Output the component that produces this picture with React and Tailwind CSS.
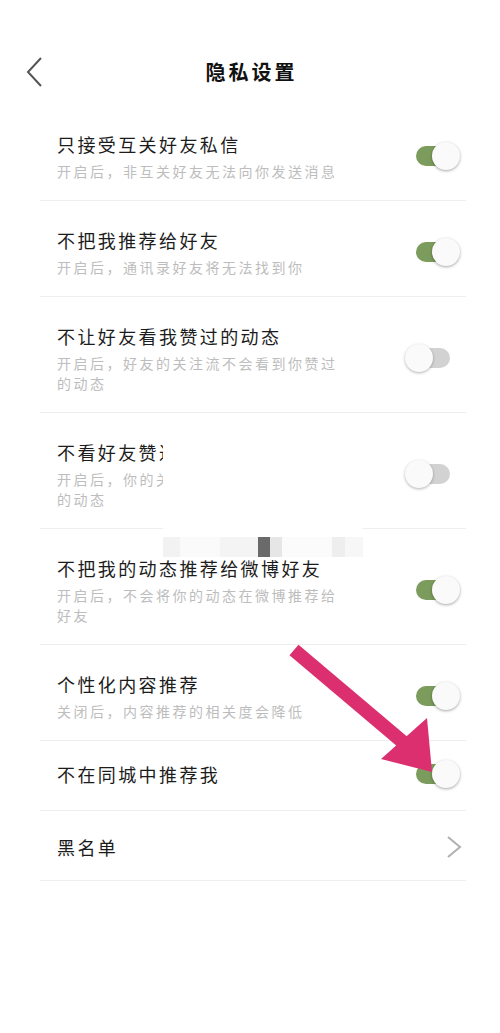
import React from "react";

const FONT = { fontFamily: '"Noto Sans CJK SC", "Noto Sans", sans-serif' };

const rows = [
  { title: "只接受互关好友私信", sub: "开启后，非互关好友无法向你发送消息", on: true },
  { title: "不把我推荐给好友", sub: "开启后，通讯录好友将无法找到你", on: true },
  { title: "不让好友看我赞过的动态", sub: "开启后，好友的关注流不会看到你赞过的动态", on: false },
  { title: "不看好友赞过的动态", sub: "开启后，你的关注流不会看到好友赞过的动态", on: false },
  { title: "不把我的动态推荐给微博好友", sub: "开启后，不会将你的动态在微博推荐给好友", on: true },
  { title: "个性化内容推荐", sub: "关闭后，内容推荐的相关度会降低", on: true },
  { title: "不在同城中推荐我", on: true },
];

// Toggle switch, track + knob
const Toggle = ({ on }) => (
  <div className="relative w-[56px] h-[28px] shrink-0">
    {on ? (
      <>
        <div className="absolute left-[11px] top-[4px] w-[30px] h-[20px] rounded-full bg-[#7b9c5c]" />
        <div className="absolute left-[27px] top-0 w-[28px] h-[28px] rounded-full bg-[#fafafa] shadow-[0_1px_3px_rgba(0,0,0,0.35)]" />
      </>
    ) : (
      <>
        <div className="absolute left-[15px] top-[4px] w-[30px] h-[20px] rounded-full bg-[#d2d2d2]" />
        <div className="absolute left-0 top-0 w-[28px] h-[28px] rounded-full bg-[#fafafa] shadow-[0_1px_3px_rgba(0,0,0,0.3)]" />
      </>
    )}
  </div>
);

const SettingRow = ({ title, sub, on }) => (
  <div
    className={`flex items-center justify-between border-b border-[#eeeeee] pl-[17px] pr-[5px] ${
      sub ? "pt-[26px] pb-[19px]" : "pt-[19px] pb-[22px]"
    }`}
  >
    <div className="flex flex-col">
      <div className="text-[18px] leading-[26px] tracking-[2.4px] text-[#1c1c1c]">{title}</div>
      {sub && (
        <div className="mt-[4px] max-w-[290px] text-[14px] leading-[20px] tracking-[2.5px] text-[#bdbdbd]">
          {sub}
        </div>
      )}
    </div>
    <Toggle on={on} />
  </div>
);

export default function App() {
  return (
    <div className="relative w-[500px] h-[1033px] bg-white overflow-hidden" style={FONT}>
      {/* Header */}
      <div className="relative flex justify-center h-[105px] pt-[57px]">
        <svg
          className="absolute left-[24px] top-[56px]"
          width="22"
          height="32"
          viewBox="0 0 22 32"
          fill="none"
          stroke="#555"
          strokeWidth="2"
        >
          <path d="M17 2 L4 16 L17 30" />
        </svg>
        <div className="text-[20px] leading-[30px] font-bold tracking-[3px] text-[#111] pl-[3px]">隐私设置</div>
      </div>

      {/* List */}
      <div className="mx-[40px] w-[426px]">
        {rows.map((r) => (
          <SettingRow key={r.title} {...r} />
        ))}
        <div className="flex items-center justify-between border-b border-[#eeeeee] pl-[17px] pr-[4px] pt-[23px] pb-[20px]">
          <div className="text-[18px] leading-[26px] tracking-[2.4px] text-[#1c1c1c]">黑名单</div>
          <svg width="16" height="24" viewBox="0 0 16 24" fill="none" stroke="#b0b0b0" strokeWidth="2">
            <path d="M2 2 L14 12 L2 22" />
          </svg>
        </div>
      </div>

      {/* Redaction mask */}
      <div className="absolute left-[163px] top-[420px] w-[200px] h-[117px] bg-white" />
      <div className="absolute left-[163px] top-[537px] w-[200px] h-[20px] flex">
        <div className="w-[17px] h-full bg-[#f2f2f2]" />
        <div className="w-[40px] h-full bg-[#fafafa]" />
        <div className="w-[38px] h-full bg-[#f4f4f4]" />
        <div className="w-[12px] h-full bg-[#6a6a6a]" />
        <div className="w-[12px] h-full bg-[#e6e6e6]" />
        <div className="w-[50px] h-full bg-[#fbfbfb]" />
        <div className="w-[13px] h-full bg-[#eeeeee]" />
        <div className="w-[18px] h-full bg-[#f7f7f7]" />
      </div>

      {/* Annotation arrow */}
      <svg className="absolute left-0 top-0 pointer-events-none" width="500" height="1033">
        <line x1="294" y1="650" x2="404" y2="743" stroke="#dc2f6f" strokeWidth="14" />
        <polygon points="381,759 427,718 432,772" fill="#dc2f6f" />
      </svg>
    </div>
  );
}
